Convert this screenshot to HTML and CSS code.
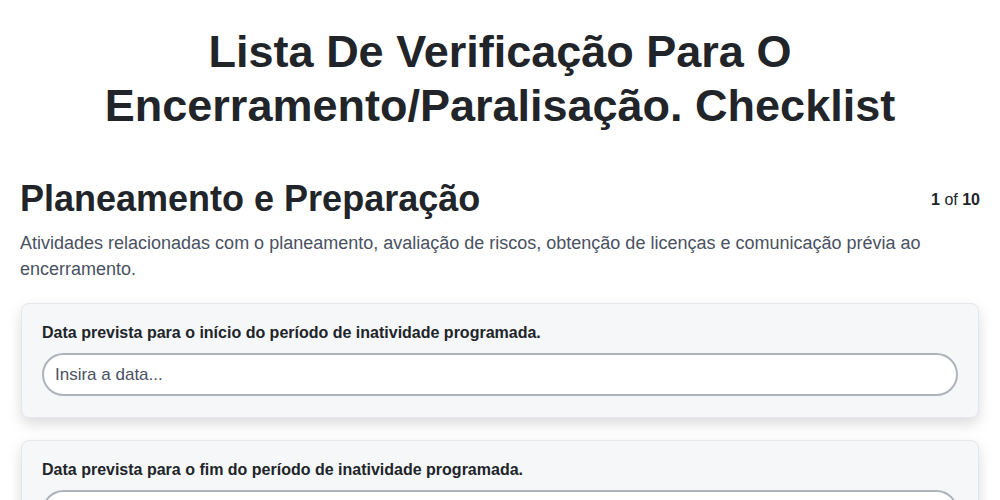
FILE: index.html
```html
<!DOCTYPE html>
<html lang="pt">
<head>
    <meta charset="UTF-8">
    <meta name="viewport" content="width=device-width, initial-scale=1.0">
    <title>Checklist</title>
    <link rel="stylesheet" href="styles.css">
</head>
<body>
    <div class="container">
        <h1 class="title">Lista De Verificação Para O Encerramento/Paralisação. Checklist</h1>

        <div class="section-head">
            <h2>Planeamento e Preparação</h2>
            <span class="step"><b>1</b> of <b>10</b></span>
        </div>
        <p class="section-desc">Atividades relacionadas com o planeamento, avaliação de riscos, obtenção de licenças e comunicação prévia ao encerramento.</p>

        <div class="card">
            <label for="q1">Data prevista para o início do período de inatividade programada.</label>
            <input type="text" id="q1" placeholder="Insira a data...">
        </div>
        <div class="card">
            <label for="q2">Data prevista para o fim do período de inatividade programada.</label>
            <input type="text" id="q2" placeholder="Insira a data...">
        </div>
    </div>
</body>
</html>
```

FILE: styles.css
```css
body {
    font-family: "Liberation Sans", Arial, sans-serif;
    background-color: #ffffff;
    color: #212529;
    margin: 0;
    padding: 0;
}

.container {
    padding: 25px 20px 20px;
}

.title {
    font-size: 45px;
    line-height: 54px;
    font-weight: 700;
    text-align: center;
    margin: 0 60px 44px;
}

.section-head {
    display: flex;
    justify-content: space-between;
    align-items: baseline;
}

.section-head h2 {
    font-size: 36px;
    font-weight: 700;
    margin: 0;
    line-height: 44px;
}

.step {
    font-size: 16px;
    color: #212529;
    position: relative;
    top: -6px;
}

.section-desc {
    font-size: 18px;
    line-height: 26px;
    color: #4a5162;
    margin: 9px 0 21px;
    max-width: 940px;
}

.card {
    background-color: #f6f7f9;
    border: 1px solid #e4e7eb;
    border-radius: 8px;
    box-shadow: 0 6px 14px rgba(0, 0, 0, 0.14);
    padding: 20px 20px 21px;
    margin: 0 1px 22px;
}

.card label {
    display: block;
    font-size: 16px;
    font-weight: 700;
    margin-bottom: 11px;
}

.card input {
    display: block;
    box-sizing: border-box;
    width: 100%;
    height: 43px;
    padding: 0 11px;
    font-family: inherit;
    font-size: 17px;
    color: #212529;
    background-color: #ffffff;
    border: 2px solid #adb4bc;
    border-radius: 22px;
    outline: none;
}

.card input::placeholder {
    color: #4a5162;
}
```
